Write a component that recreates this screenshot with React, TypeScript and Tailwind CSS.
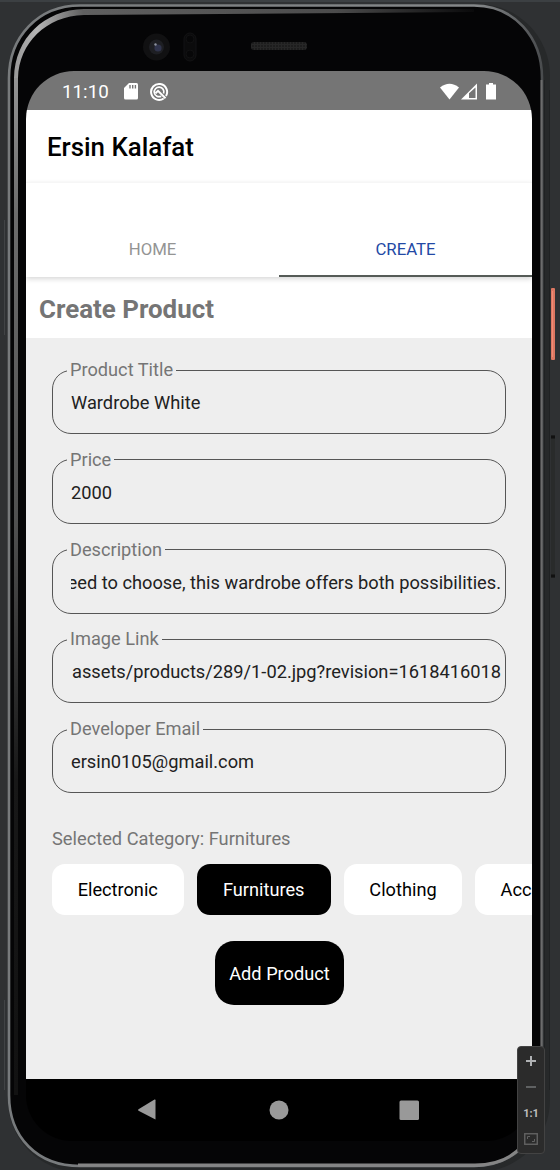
const fields = [
  { label: "Product Title", value: "Wardrobe White" },
  { label: "Price", value: "2000" },
  { label: "Description", value: "eed to choose, this wardrobe offers both possibilities.", end: true },
  { label: "Image Link", value: "assets/products/289/1-02.jpg?revision=1618416018", end: true },
  { label: "Developer Email", value: "ersin0105@gmail.com" },
];

const categories = [
  { name: "Electronic", width: "w-[131.5px]" },
  { name: "Furnitures", width: "w-[134.5px]" },
  { name: "Clothing", width: "w-[118px]" },
  { name: "Acc", width: "w-[82px]" },
];

function DeviceFrame() {
  return (
    <svg className="absolute inset-0" width="560" height="1170" viewBox="0 0 560 1170" fill="none">
      <defs>
        <linearGradient id="rim" x1="0" y1="0" x2="560" y2="0" gradientUnits="userSpaceOnUse">
          <stop offset="0" stopColor="#777a7c" />
          <stop offset="0.85" stopColor="#85888a" />
          <stop offset="1" stopColor="#3a3c3e" />
        </linearGradient>
        <linearGradient id="bevelSide" x1="0" y1="60" x2="0" y2="1090" gradientUnits="userSpaceOnUse">
          <stop offset="0" stopColor="#989898" />
          <stop offset="0.15" stopColor="#6c6c6c" />
          <stop offset="0.45" stopColor="#505050" />
          <stop offset="0.7" stopColor="#181818" />
          <stop offset="1" stopColor="#121212" />
        </linearGradient>
        <linearGradient id="bevelTop" x1="14" y1="0" x2="474" y2="0" gradientUnits="userSpaceOnUse">
          <stop offset="0" stopColor="#989898" />
          <stop offset="0.05" stopColor="#b5b5b5" />
          <stop offset="0.15" stopColor="#606060" />
          <stop offset="0.7" stopColor="#4c4c4c" />
          <stop offset="1" stopColor="#0a0a0b" />
        </linearGradient>
        <pattern id="mesh" width="3" height="3" patternUnits="userSpaceOnUse">
          <rect width="3" height="3" fill="#272727" />
          <circle cx="1" cy="1" r="0.8" fill="#101010" />
        </pattern>
      </defs>
      <rect width="560" height="1170" fill="#2f3133" />
      <rect width="560" height="2" fill="#3c4043" />
      <path d="M4.5 220v115M4.500 1000v90" stroke="#414345" />
      <rect x="551" y="288" width="4" height="72" rx="1" fill="#dc7762" />
      <path d="M552.500 291v66" stroke="#f08c75" />
      <rect x="551" y="435" width="4" height="143" fill="#292b2b" />
      <path d="M551 437h4M551 576h4" stroke="#111" strokeWidth="3" />
      <rect x="8" y="4" width="542" height="1168" rx="72" fill="#27292a" />
      <path d="M80 5.500H474C514 5.500 542 37 542 78V1097C542 1137 514 1166 474 1166H80C37 1166 9 1137 9 1095V78C9 37 38 5.500 80 5.500Z" fill="#050506" stroke="url(#rim)" strokeWidth="2.600" />
      <path d="M14 78H18V1095H14Z" fill="url(#bevelSide)" />
      <path d="M14 78C15 38 44 10 84 9H474V12L84 15C46 16 19 43 18 78Z" fill="url(#bevelTop)" />
      <path d="M78 1165H475C497 1165 512 1158 523 1145" stroke="#858585" strokeWidth="3" />
      <path d="M541.500 80V1090" stroke="#6c6c6c" strokeWidth="2" />
      <path d="M544.500 80V1095M549.500 90V1090" stroke="#202223" />
      <circle cx="156.500" cy="47" r="13.500" fill="#111112" />
      <circle cx="156.500" cy="47" r="7.500" fill="#1e1f23" />
      <circle cx="158" cy="48" r="3.600" fill="#30344c" />
      <circle cx="155.500" cy="44.500" r="1.200" fill="#8d929e" />
      <rect x="184" y="33" width="12" height="28" rx="6" fill="#0b0b0c" stroke="#131314" />
      <circle cx="190" cy="39" r="4" fill="#070708" stroke="#111112" />
      <circle cx="190" cy="54" r="4" fill="#070708" stroke="#111112" />
      <rect x="251" y="42" width="56" height="8" rx="3" fill="url(#mesh)" />
    </svg>
  );
}

function StatusBar() {
  return (
    <div className="flex h-[39px] shrink-0 items-center bg-[#757575] pt-[2px] pr-[35px] pl-[36px] text-white">
      <span className="w-[61.500px] text-[18.8px] leading-6">11:10</span>
      <svg width="14" height="17" viewBox="0 0 14 17">
        <path d="M5 0H12.500Q14 0 14 1.500V15Q14 16.500 12.500 16.500H1.500Q0 16.500 0 15V5Z" fill="#fff" />
        <path d="M6 2v3.500M8.700 2v3.500M11.400 2v3.500" stroke="#757575" strokeWidth="1.400" />
      </svg>
      <svg className="ml-[11px]" width="20" height="20" viewBox="0 0 20 20" fill="none" stroke="#fff">
        <path d="M14.700 16.500A8 8 0 1 1 17 14" strokeWidth="2" />
        <path d="M12.200 14.200A4.800 4.800 0 1 1 14.600 11.500" strokeWidth="1.700" />
        <path d="M6.500 11.200L9 8.800L16.500 16.200" strokeWidth="2" />
      </svg>
      <svg className="ml-auto" width="57" height="18" viewBox="0 0 57 18" fill="#fff">
        <path d="M0 4.500Q9.500-3 19 4.500L9.500 16.500Z" />
        <path fillRule="evenodd" d="M21 16.500L37 .500V16.500ZM29 10.300V15H35.500V4.500Z" />
        <path d="M49 0h4v1.500h3v15H46v-15h3Z" />
      </svg>
    </div>
  );
}

function Chip({ name, width }: { name: string; width: string }) {
  const active = name === "Furnitures";
  return (
    <button className={`h-[51px] shrink-0 rounded-[13px] text-[18.2px] whitespace-nowrap ${width} ${active ? "bg-black text-white" : "bg-white text-black"}`}>
      {name}
    </button>
  );
}

function Field({ label, value, end }: { label: string; value: string; end?: boolean }) {
  return (
    <fieldset className="h-[76px] min-w-0 rounded-[19px] border border-[#555] px-0">
      <legend className="ml-[14px] px-[3px] text-[18.2px] leading-6 text-[#757575]">{label}</legend>
      <div className={`mr-[4px] ml-[18px] flex overflow-hidden pt-[9px] text-[18.25px] leading-6 whitespace-nowrap text-[#212121] ${end ? "justify-end" : ""}`}>
        <span>{value}</span>
      </div>
    </fieldset>
  );
}

export default function App() {
  return (
    <div className="relative h-[1170px] w-[560px] overflow-hidden font-[Roboto,sans-serif]">
      <DeviceFrame />
      <div className="relative pt-[71px] pl-[26px]">
        <div className="flex h-[1070px] w-[506px] flex-col overflow-hidden rounded-t-[48px] rounded-b-[46px]">
          <StatusBar />
          <header className="flex h-[72px] shrink-0 items-center bg-white pt-[2px] pl-[21px] text-[25.85px] font-medium text-black">Ersin Kalafat</header>
          <nav className="relative z-10 flex h-[95px] shrink-0 items-end border-t border-[#f6f6f6] bg-white text-[16.75px] shadow-[0_2px_5px_rgba(0,0,0,0.16)]">
            <a className="flex h-[57px] flex-1 items-center justify-center pt-[2px] text-[#949494]">HOME</a>
            <a className="flex h-[57px] flex-1 items-center justify-center border-b-2 border-[#555b57] pt-[4px] text-[#2349a5]">CREATE</a>
          </nav>
          <h1 className="flex h-[61px] shrink-0 items-center bg-white pt-[3px] pl-[13px] text-[25.9px] font-bold text-[#757575]">Create Product</h1>
          <main className="flex flex-1 flex-col overflow-hidden bg-[#eee] pt-[20px] pl-[26px]">
            <form className="flex w-[454px] flex-col gap-[13.8px]">
              {fields.map((f) => (
                <Field key={f.label} {...f} />
              ))}
            </form>
            <p className="mt-[34px] text-[18.25px] leading-6 text-[#757575]">Selected Category: Furnitures</p>
            <div className="mt-[13px] flex gap-[13px] overflow-hidden">
              {categories.map((c) => (
                <Chip key={c.name} {...c} />
              ))}
            </div>
            <button className="mt-[26px] ml-[163px] h-[64px] w-[129px] rounded-[19px] bg-black text-[18.2px] text-white">Add Product</button>
          </main>
          <div className="flex h-[62px] shrink-0 items-center justify-center bg-black">
            <svg width="284" height="24" viewBox="0 0 284 24" fill="#999">
              <path d="M18.500 2.200V21.500L1.500 12.700Q.500 12 1.500 11.300L17.500 1.600Q18.500 1.200 18.500 2.200Z" />
              <circle cx="142" cy="12" r="9.500" />
              <rect x="262.500" y="2.500" width="19.500" height="19.500" rx="1.500" />
            </svg>
          </div>
        </div>
      </div>
      <div className="absolute top-[1046px] left-[517px] flex h-[108px] w-[28px] flex-col items-center rounded-[4px] border border-[#434343] bg-[#2b2b2b] text-[#bdbdbd]">
        <svg className="mt-[9px]" width="10" height="10" viewBox="0 0 10 10"><path d="M0 5H10M5 0V10" stroke="#afb1b3" strokeWidth="2" /></svg>
        <svg className="mt-[20px]" width="10" height="2"><rect width="10" height="2" fill="#5f6162" /></svg>
        <span className="mt-[17px] text-[11px] leading-[18px] font-bold">1:1</span>
        <svg className="mt-[10px]" width="14" height="12" viewBox="0 0 14 12" fill="none" stroke="#626262">
          <rect x=".75" y=".75" width="12.500" height="10.500" strokeWidth="1.400" />
          <path d="M3.500 6V3.500H6M10.500 6V8.500H8" />
        </svg>
      </div>
    </div>
  );
}
